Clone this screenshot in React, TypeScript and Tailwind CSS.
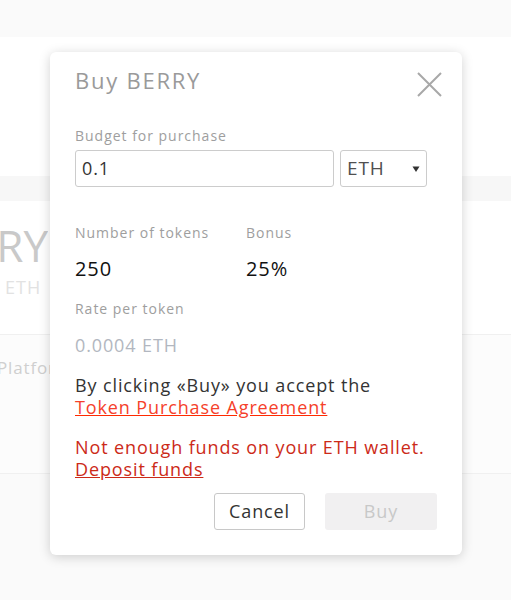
import React from 'react';

const font = { fontFamily: '"Open Sans", "Liberation Sans", sans-serif' };

const Backdrop = () => (
  <div className="w-[511px] h-[600px] flex flex-col bg-[#fafafa]">
    <div className="h-[37px] bg-[#fafafa]" />
    <div className="h-[139px] bg-white" />
    <div className="h-[25px] bg-[#f7f7f7]" />
    <div className="h-[134px] bg-white border-b border-[#f0f0f0] flex flex-col">
      <div className="w-[48px] overflow-hidden flex justify-end mt-[18px]">
        <span className="text-[44px] leading-[52px] text-[#c9c9c9] whitespace-nowrap">BERRY</span>
      </div>
      <span className="ml-[5px] mt-[4px] text-[18px] leading-[24px] text-[#e2e2e2] tracking-[0.06em]">ETH</span>
    </div>
    <div className="h-[139px] bg-[#fcfcfc] border-b border-[#f0f0f0] pt-[20px]">
      <span className="ml-[-3px] text-[17px] text-[#cfcfcf] whitespace-nowrap tracking-[0.05em]">Platform</span>
    </div>
  </div>
);

const CloseIcon = () => (
  <svg width="25" height="25" viewBox="0 0 25 25" fill="none">
    <path d="M1 1 L24 24 M24 1 L1 24" stroke="#a8a8a8" strokeWidth="2" />
  </svg>
);

const Modal = () => (
  <div className="absolute left-[50px] top-[52px] w-[412px] h-[503px] bg-white rounded-[6px] shadow-[0_2px_12px_rgba(0,0,0,0.18)] px-[25px] pt-[13px] tracking-[0.055em]">
    <div className="flex items-start justify-between">
      <h2 className="text-[22px] leading-[30px] text-[#9a9a9a] tracking-[0.08em]">Buy BERRY</h2>
      <button className="mt-[7px] mr-[-5px]">
        <CloseIcon />
      </button>
    </div>

    <div className="mt-[30px] text-[14px] leading-[18px] text-[#9e9e9e] tracking-[0.07em]">Budget for purchase</div>
    <div className="mt-[5px] flex gap-[6px]">
      <div className="w-[259px] h-[37px] border border-[#cccccc] rounded-[3px] flex items-center px-[6px] text-[18px] text-[#333]">0.1</div>
      <div className="w-[87px] h-[37px] border border-[#cccccc] rounded-[3px] flex items-center justify-between pl-[6px] pr-[6px] text-[19px] text-[#505050]">
        <span>ETH</span>
        <svg width="8" height="8" viewBox="0 0 8 8">
          <path d="M0.5 1.5 L7.5 1.5 L4 7 Z" fill="#333" />
        </svg>
      </div>
    </div>

    <div className="mt-[37px] flex">
      <div className="w-[171px]">
        <div className="text-[14px] leading-[18px] text-[#9e9e9e] tracking-[0.07em]">Number of tokens</div>
        <div className="mt-[18px] text-[20px] leading-[18px] text-[#111]">250</div>
      </div>
      <div>
        <div className="text-[14px] leading-[18px] text-[#9e9e9e] tracking-[0.07em]">Bonus</div>
        <div className="mt-[18px] text-[20px] leading-[18px] text-[#111]">25%</div>
      </div>
    </div>

    <div className="mt-[22px] text-[14px] leading-[18px] text-[#9e9e9e] tracking-[0.07em]">Rate per token</div>
    <div className="mt-[18px] text-[18px] leading-[18px] text-[#b2b7c0]">0.0004 ETH</div>

    <p className="mt-[20px] text-[18px] leading-[22px] text-[#333]">
      By clicking «Buy» you accept the
      <br />
      <a className="text-[#f5412b] underline decoration-[#ff2a00]">Token Purchase Agreement</a>
    </p>

    <p className="mt-[18px] text-[18px] leading-[22px] text-[#cc2a18]">
      Not enough funds on your ETH wallet.
      <br />
      <a className="underline">Deposit funds</a>
    </p>

    <div className="mt-[13px] flex justify-end gap-[20px]">
      <button className="w-[91px] h-[37px] border border-[#c8c8c8] rounded-[3px] bg-white text-[18px] text-[#333]">Cancel</button>
      <button className="w-[112px] h-[37px] rounded-[3px] bg-[#f1f0f1] text-[18px] text-[#c8c8c8]">Buy</button>
    </div>
  </div>
);

export default function App() {
  return (
    <div className="relative w-[511px] h-[600px] overflow-hidden" style={font}>
      <Backdrop />
      <Modal />
    </div>
  );
}
